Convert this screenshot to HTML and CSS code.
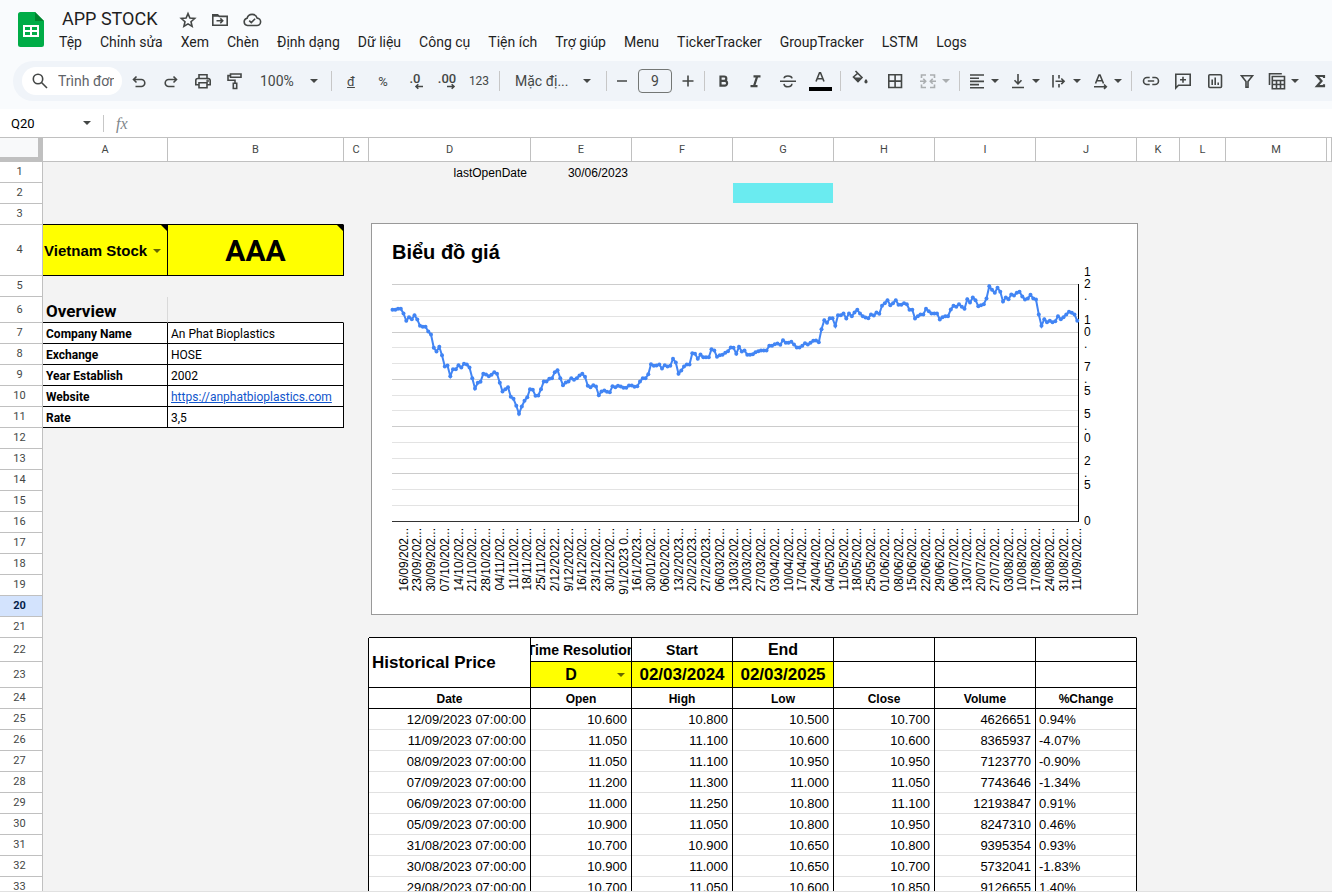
FILE: index.html
```html
<!DOCTYPE html>
<html lang="vi">
<head>
<meta charset="utf-8">
<title>APP STOCK</title>
<link rel="stylesheet" href="styles.css">
</head>
<body>
<header class="top">
  <div class="brand">
    <svg class="logo" viewBox="0 0 26 35" aria-hidden="true"><path fill="#00ac47" d="M2.500 0H17l9 9v23.500a2.500 2.500 0 0 1-2.500 2.500h-21A2.500 2.500 0 0 1 0 32.500v-30A2.500 2.500 0 0 1 2.500 0z"/><path fill="#00832d" d="M17 0l9 9h-9z"/><path fill="#fff" fill-rule="evenodd" d="M5 13h16v12H5zM7 15v3h5v-3zm7 0v3h5v-3zM7 20v3h5v-3zm7 0v3h5v-3z"/></svg>
    <div class="heading">
      <div class="title-row">
        <h1>APP STOCK</h1>
        <button class="tool" aria-label="Gắn dấu sao"><svg viewBox="0 0 20 20"><path d="M10 3.600l1.900 4.500 4.800.4-3.700 3.200 1.100 4.700L10 13.900l-4.100 2.500L7 11.700 3.300 8.500l4.800-.4z"/></svg></button>
        <button class="tool" aria-label="Di chuyển"><svg viewBox="0 0 20 20"><path d="M2.800 15.200V4.800h4.800l1.600 1.600h8v8.800zM2.800 6h5.500M6.500 10.800h6M10.300 8.400l2.400 2.400-2.400 2.400"/></svg></button>
        <button class="tool" aria-label="Trạng thái tài liệu"><svg viewBox="0 0 20 20"><path d="M5.500 15.500a3.700 3.700 0 0 1-.4-7.300 5.200 5.200 0 0 1 10-.1 3.700 3.700 0 0 1-.4 7.400zM7.200 10.600l2.100 2 3.800-3.800"/></svg></button>
      </div>
      <nav class="menu">
        <button>Tệp</button><button>Chỉnh sửa</button><button>Xem</button><button>Chèn</button><button>Định dạng</button><button>Dữ liệu</button><button>Công cụ</button><button>Tiện ích</button><button>Trợ giúp</button><button>Menu</button><button>TickerTracker</button><button>GroupTracker</button><button>LSTM</button><button>Logs</button>
      </nav>
    </div>
  </div>
  <div class="toolbar">
    <div class="search"><svg viewBox="0 0 20 20" aria-hidden="true"><circle cx="8" cy="8" r="4.700"/><path d="M11.500 11.500l5.500 5.500"/></svg><input type="text" placeholder="Trình đơn" aria-label="Trình đơn"></div>
    <button class="tool" aria-label="Hoàn tác"><svg viewBox="0 0 20 20"><path d="M7.500 5.500L4.500 8.500l3 3M4.500 8.500h7.800a3.500 3.500 0 0 1 0 7H6.500"/></svg></button>
    <button class="tool" aria-label="Làm lại"><svg viewBox="0 0 20 20"><path d="M12.500 5.500l3 3-3 3M15.500 8.500H7.700a3.500 3.500 0 0 0 0 7h5.800"/></svg></button>
    <button class="tool" aria-label="In"><svg viewBox="0 0 20 20"><path d="M6 7.500V3.800h8v3.700M5.500 13.800H2.800V9.500a2 2 0 0 1 2-2h10.400a2 2 0 0 1 2 2v4.300h-2.700M6 11.800h8v5H6z"/><circle cx="14.600" cy="9.900" r=".5"/></svg></button>
    <button class="tool" aria-label="Sơn định dạng"><svg viewBox="0 0 20 20"><path d="M5.500 3h10.500v3.300H5.500zM5.500 4.600H3v4.600h7v3M8.300 12.300h3.400v5.200H8.300z"/></svg></button>
    <label class="pick zoom"><select aria-label="Thu phóng"><option>100%</option></select></label>
    <span class="rule"></span>
    <button class="tool text"><u>đ</u></button>
    <button class="tool text">%</button>
    <button class="tool text dec" aria-label="Giảm số thập phân"><b>.0</b><svg viewBox="0 0 20 20"><path d="M18 15.500h-7M13.300 13.200L11 15.500l2.300 2.300"/></svg></button>
    <button class="tool text dec" aria-label="Tăng số thập phân"><b>.00</b><svg viewBox="0 0 20 20"><path d="M10 15.500h7M14.700 13.200l2.300 2.300-2.300 2.300"/></svg></button>
    <button class="tool text small">123</button>
    <span class="rule"></span>
    <label class="pick font"><select aria-label="Phông chữ"><option>Mặc đị...</option></select></label>
    <span class="rule"></span>
    <button class="tool step" aria-label="Giảm cỡ chữ"><svg viewBox="0 0 20 20"><path d="M5 10h10"/></svg></button>
    <input class="size" type="text" value="9" aria-label="Cỡ chữ">
    <button class="tool step" aria-label="Tăng cỡ chữ"><svg viewBox="0 0 20 20"><path d="M4.500 10h11M10 4.500v11"/></svg></button>
    <span class="rule"></span>
    <button class="tool" aria-label="Đậm"><svg viewBox="0 0 20 20"><path class="heavy" d="M6.500 5.500h3.600a2.200 2.200 0 0 1 0 4.400H6.500zM6.500 9.900h4.200a2.400 2.400 0 0 1 0 4.800H6.500z"/></svg></button>
    <button class="tool" aria-label="Nghiêng"><svg viewBox="0 0 20 20"><path class="heavy" d="M7.500 5.300h7M4.500 15.200h7M11.200 5.300L8 15.200"/></svg></button>
    <button class="tool" aria-label="Gạch ngang"><svg viewBox="0 0 20 20"><path d="M2 10.300h16M14 7.300c-.3-3-7.700-3.300-7.900 0M6 12.800c.4 4 7.800 3.700 7.900 0"/></svg></button>
    <button class="tool color" aria-label="Màu văn bản"><svg viewBox="0 0 20 20"><path d="M6 12.500L9.500 3.800h1L14 12.500M7.200 9.800h5.600"/></svg><i></i></button>
    <span class="rule"></span>
    <button class="tool raise" aria-label="Màu nền"><svg viewBox="0 0 20 20"><path d="M5.500 3l6.500 6.500-4 4-4.500-4.500L8 5"/><path class="solid" d="M3.500 9.500h8.700L8 14zM16 11c1 1.300 1.600 2 1.600 2.800a1.600 1.600 0 0 1-3.200 0c0-.8.600-1.500 1.600-2.800z"/></svg></button>
    <button class="tool gap" aria-label="Đường viền"><svg viewBox="0 0 20 20"><path d="M3.800 3.800h12.700v12.700H3.800zM10.100 3.800v12.700M3.800 10.100h12.700"/></svg></button>
    <button class="split off gap" aria-label="Hợp nhất ô" disabled><svg viewBox="0 0 20 20"><path d="M8 4H3.500v3M8 16.500H3.500v-3M12 4h4.500v3M12 16.500h4.500v-3M2 10.300h5.500M5.300 7.800l2.400 2.500-2.400 2.500M18 10.300h-5.500M14.700 7.800l-2.400 2.500 2.400 2.500"/></svg></button>
    <span class="rule"></span>
    <button class="split" aria-label="Căn ngang"><svg viewBox="0 0 20 20"><path d="M3 4h14M3 7.200h9M3 10.400h14M3 13.600h9M3 16.800h14"/></svg></button>
    <button class="split" aria-label="Căn dọc"><svg viewBox="0 0 20 20"><path d="M4 16.500h12M10 3v9.500M6.500 9.300l3.500 3.500 3.500-3.500"/></svg></button>
    <button class="split" aria-label="Xuống dòng"><svg viewBox="0 0 20 20"><path d="M4 4v12.500M10 4v3.500M10 13v3.500M6.500 10.300h8M12.300 7.500l2.800 2.800-2.800 2.800"/></svg></button>
    <button class="split" aria-label="Xoay văn bản"><svg viewBox="0 0 20 20"><path d="M5.500 12.500L9 4h1l3.500 8.500M6.800 9.700h5.400M4 15.700h12M14 13.500l2.300 2.200-2.300 2.200"/></svg></button>
    <span class="rule"></span>
    <button class="tool" aria-label="Chèn đường liên kết"><svg viewBox="0 0 20 20"><path d="M8.700 6.500H6a3.500 3.500 0 0 0 0 7h2.700M11.300 6.500H14a3.500 3.500 0 0 1 0 7h-2.700M6.800 10h6.400"/></svg></button>
    <button class="tool" aria-label="Chèn nhận xét"><svg viewBox="0 0 20 20"><path d="M2.800 17V3.300h14.400v11H5.500zM10 5.700v6M7 8.700h6"/></svg></button>
    <button class="tool" aria-label="Chèn biểu đồ"><svg viewBox="0 0 20 20"><rect x="3.800" y="3.800" width="12.700" height="12.700" rx="1"/><path d="M7.200 8.500v5.500M10.200 6.500V14M13.200 11.500V14"/></svg></button>
    <button class="tool" aria-label="Tạo bộ lọc"><svg viewBox="0 0 20 20"><path d="M4.500 4.800h11L11 10.500v5.700H9v-5.700z"/></svg></button>
    <button class="split" aria-label="Chế độ xem bộ lọc"><svg viewBox="0 0 20 20"><path d="M2.500 14V2.800h12.300M5.300 5.500h12.200v12.200H5.300zM5.300 9.500h12.200M5.300 13.500h12.200M9.500 9.500v8.200M13.500 9.500v8.200"/></svg></button>
    <button class="tool" aria-label="Hàm"><svg viewBox="0 0 20 20"><path class="heavy" d="M14 7V5H7l4.500 5.100L7 15.200h7v-2"/></svg></button>
  </div>
</header>

<div class="formula">
  <label class="pick name"><input type="text" value="Q20" aria-label="Hộp tên"></label>
  <span class="rule"></span>
  <i class="fx">fx</i>
  <input class="entry" type="text" aria-label="Thanh công thức">
</div>

<main class="sheet">
<table>
  <colgroup><col class="c-num"><col class="c-a"><col class="c-b"><col class="c-c"><col class="c-d"><col class="c-std"><col class="c-std"><col class="c-std"><col class="c-std"><col class="c-std"><col class="c-std"><col class="c-k"><col class="c-l"><col class="c-std"><col></colgroup>
  <thead>
    <tr><td class="corner"></td><th>A</th><th>B</th><th>C</th><th>D</th><th>E</th><th>F</th><th>G</th><th>H</th><th>I</th><th>J</th><th>K</th><th>L</th><th>M</th><th></th></tr>
  </thead>
  <tbody>
    <tr><th>1</th><td colspan="3"></td><td class="right">lastOpenDate</td><td class="right">30/06/2023</td><td colspan="9"></td></tr>
    <tr><th>2</th><td colspan="6"></td><td class="cyan"></td><td colspan="7"></td></tr>
    <tr><th>3</th><td class="edge" colspan="2"></td><td colspan="12"></td></tr>
    <tr class="r4"><th>4</th><td class="box yellow note"><label class="cell-pick market"><select aria-label="Thị trường"><option>Vietnam Stock</option></select></label></td><td class="box yellow note ticker">AAA</td><td colspan="12"></td></tr>
    <tr><th>5</th><td colspan="14"></td></tr>
    <tr class="r6"><th>6</th><td class="overview">Overview</td><td class="edge"></td><td colspan="12"></td></tr>
    <tr class="info"><th>7</th><td class="box bold">Company Name</td><td class="box">An Phat Bioplastics</td><td colspan="12"></td></tr>
    <tr class="info"><th>8</th><td class="box bold">Exchange</td><td class="box">HOSE</td><td colspan="12"></td></tr>
    <tr class="info"><th>9</th><td class="box bold">Year Establish</td><td class="box">2002</td><td colspan="12"></td></tr>
    <tr class="info"><th>10</th><td class="box bold">Website</td><td class="box"><a href="https://anphatbioplastics.com">https://anphatbioplastics.com</a></td><td colspan="12"></td></tr>
    <tr class="info"><th>11</th><td class="box bold">Rate</td><td class="box">3,5</td><td colspan="12"></td></tr>
    <tr><th>12</th><td colspan="14"></td></tr>
    <tr><th>13</th><td colspan="14"></td></tr>
    <tr><th>14</th><td colspan="14"></td></tr>
    <tr><th>15</th><td colspan="14"></td></tr>
    <tr><th>16</th><td colspan="14"></td></tr>
    <tr><th>17</th><td colspan="14"></td></tr>
    <tr><th>18</th><td colspan="14"></td></tr>
    <tr><th>19</th><td colspan="14"></td></tr>
    <tr><th class="current">20</th><td colspan="14"></td></tr>
    <tr><th>21</th><td colspan="3"></td><td class="edge" colspan="7"></td><td colspan="4"></td></tr>
    <tr class="r22"><th>22</th><td class="side" colspan="3"></td><td class="box history" rowspan="2">Historical Price</td><td class="box head"><div class="mid">Time Resolution</div></td><td class="box head center">Start</td><td class="box head end center">End</td><td class="box"></td><td class="box"></td><td class="box"></td><td colspan="4"></td></tr>
    <tr class="r23"><th>23</th><td class="side" colspan="3"></td><td class="box yellow"><label class="cell-pick res"><select aria-label="Time Resolution"><option>D</option></select></label></td><td class="box yellow date center">02/03/2024</td><td class="box yellow date center">02/03/2025</td><td class="box"></td><td class="box"></td><td class="box"></td><td colspan="4"></td></tr>
    <tr class="names"><th>24</th><td class="side" colspan="3"></td><td class="box">Date</td><td class="box">Open</td><td class="box">High</td><td class="box">Low</td><td class="box">Close</td><td class="box">Volume</td><td class="box">%Change</td><td colspan="4"></td></tr>
    <tr class="data"><th>25</th><td class="side" colspan="3"></td><td>12/09/2023 07:00:00</td><td>10.600</td><td>10.800</td><td>10.500</td><td>10.700</td><td>4626651</td><td>0.94%</td><td colspan="4"></td></tr>
    <tr class="data"><th>26</th><td class="side" colspan="3"></td><td>11/09/2023 07:00:00</td><td>11.050</td><td>11.100</td><td>10.600</td><td>10.600</td><td>8365937</td><td>-4.07%</td><td colspan="4"></td></tr>
    <tr class="data"><th>27</th><td class="side" colspan="3"></td><td>08/09/2023 07:00:00</td><td>11.050</td><td>11.100</td><td>10.950</td><td>10.950</td><td>7123770</td><td>-0.90%</td><td colspan="4"></td></tr>
    <tr class="data"><th>28</th><td class="side" colspan="3"></td><td>07/09/2023 07:00:00</td><td>11.200</td><td>11.300</td><td>11.000</td><td>11.050</td><td>7743646</td><td>-1.34%</td><td colspan="4"></td></tr>
    <tr class="data"><th>29</th><td class="side" colspan="3"></td><td>06/09/2023 07:00:00</td><td>11.000</td><td>11.250</td><td>10.800</td><td>11.100</td><td>12193847</td><td>0.91%</td><td colspan="4"></td></tr>
    <tr class="data"><th>30</th><td class="side" colspan="3"></td><td>05/09/2023 07:00:00</td><td>10.900</td><td>11.050</td><td>10.800</td><td>10.950</td><td>8247310</td><td>0.46%</td><td colspan="4"></td></tr>
    <tr class="data"><th>31</th><td class="side" colspan="3"></td><td>31/08/2023 07:00:00</td><td>10.700</td><td>10.900</td><td>10.650</td><td>10.800</td><td>9395354</td><td>0.93%</td><td colspan="4"></td></tr>
    <tr class="data"><th>32</th><td class="side" colspan="3"></td><td>30/08/2023 07:00:00</td><td>10.900</td><td>11.000</td><td>10.650</td><td>10.700</td><td>5732041</td><td>-1.83%</td><td colspan="4"></td></tr>
    <tr class="data"><th>33</th><td class="side" colspan="3"></td><td>29/08/2023 07:00:00</td><td>10.700</td><td>11.050</td><td>10.600</td><td>10.850</td><td>9126655</td><td>1.40%</td><td colspan="4"></td></tr>
  </tbody>
</table>
<figure class="chart"><svg id="price" viewBox="0 0 765 390" role="img" aria-label="Biểu đồ giá"></svg></figure>
</main>
<script src="chart.js"></script>
</body>
</html>
```
FILE: styles.css
```css
* { box-sizing: border-box; }
body {
  margin: 0;
  height: 100vh;
  overflow: hidden;
  display: flex;
  flex-direction: column;
  background: #fff;
  color: #000;
  font: 12px "Liberation Sans", Arial, sans-serif;
}
button, input, select {
  font: inherit;
  color: inherit;
  background: none;
  border: 0;
  padding: 0;
  margin: 0;
  min-width: 0;
  border-radius: 0;
}
select { appearance: none; }

/* title and menus */
.top { background: #f9fbfd; padding: 8px 0; font-family: Roboto, sans-serif; color: #444746; flex: none; }
.brand { display: flex; padding-left: 18px; gap: 15px; }
.logo { width: 26px; height: 35px; margin-top: 4px; }
.title-row { display: flex; align-items: center; height: 24px; padding-left: 3px; }
h1 { margin: 0 14px 2px 0; font-weight: 400; font-size: 18px; line-height: 22px; color: #1f1f1f; }
.menu { display: flex; align-items: flex-start; gap: 18px; height: 22px; }
.menu button { font-size: 14px; line-height: 20px; color: #1f1f1f; white-space: nowrap; }

/* toolbar */
.toolbar {
  display: flex;
  align-items: center;
  height: 40px;
  margin: 7px 0 0 13px;
  padding-left: 9px;
  border-radius: 20px 0 0 20px;
  background: #f0f4f9;
  overflow: hidden;
}
.toolbar > * { flex: none; }
svg { display: block; }
.tool svg, .split svg, .search svg { width: 20px; height: 20px; fill: none; stroke: #444746; stroke-width: 1.6; }
.tool svg .heavy { stroke-width: 2.2; }
.tool svg .solid { fill: #444746; stroke: none; }
.tool { width: 32px; height: 28px; display: flex; align-items: center; justify-content: center; position: relative; }
.text { font-size: 13px; }
.small { font-size: 12px; }
.dec b { font-weight: 500; padding-bottom: 6px; }
.dec svg { position: absolute; left: 6px; top: 4px; }
.step { width: 24px; }
.gap { margin-left: 3px; }
.raise { padding-bottom: 6px; }
.color { padding-bottom: 4px; }
.color i { position: absolute; left: 5px; bottom: 4px; width: 23px; height: 4px; background: #000; }
.search {
  display: flex;
  align-items: center;
  width: 100px;
  height: 28px;
  margin-right: 1px;
  padding: 0 8px;
  border-radius: 14px;
  background: #fff;
  gap: 8px;
}
.search svg { flex: none; }
.search input { width: 56px; font-size: 14px; }
.search input::placeholder { color: #5f6368; opacity: 1; }
.rule { width: 1px; height: 20px; margin: 0 3px 0 4px; background: #c7c7c7; }
.split { position: relative; width: 41px; height: 28px; padding-left: 4px; }
.pick { position: relative; display: block; }
.pick select, .pick input { width: 100%; height: 28px; font-size: 14px; }
.pick::after, .split::after, .cell-pick::after {
  content: "";
  position: absolute;
  right: 9px;
  top: 50%;
  margin-top: -2px;
  border: 4px solid transparent;
  border-top-color: #444746;
  border-bottom: 0;
}
.split::after { right: 5px; }
.off { opacity: .4; }
.zoom { width: 76px; padding-left: 9px; }
.font { width: 99px; padding-left: 12px; }
.font::after { right: 11px; }
.size { width: 34px; height: 24px; margin: 0 4px; border: 1px solid #747775; border-radius: 4px; text-align: center; font-size: 14px; }

/* formula bar */
.formula { display: flex; align-items: center; height: 28px; flex: none; font-family: Roboto, sans-serif; }
.name { width: 99px; padding-left: 11px; }
.name::after { right: 8px; }
.name input { font-size: 13px; }
.formula .rule { height: 17px; }
.fx { padding: 2px 9px 0; font: italic 16px/20px "Liberation Serif", serif; color: #80868b; }
.entry { flex: 1; height: 28px; }

/* grid */
.sheet { position: relative; flex: 1; min-height: 0; overflow: hidden; margin-bottom: 3px; background: #f3f3f3; box-shadow: 0 1px #e1e1e1; }
table { width: 100%; table-layout: fixed; border-collapse: separate; border-spacing: 0; }
.c-num { width: 43px; }
.c-a { width: 125px; }
.c-b { width: 176px; }
.c-c { width: 25px; }
.c-d { width: 162px; }
.c-std { width: 101px; }
.c-k { width: 43px; }
.c-l { width: 46px; }
th, td { padding: 0 3px; border: 0 solid transparent; border-width: 0 1px 1px 0; overflow: hidden; white-space: nowrap; text-align: left; }
td { line-height: 18px; padding-top: 1px; }
th { font: 11px/16px Roboto, sans-serif; color: #444746; background: #fff; border-color: #c0c0c0; text-align: center; }
tbody tr { height: 21px; }
tbody th { padding: 0 3px 0 0; }
thead tr { height: 25px; }
thead th, .corner { border-top: 1px solid #c0c0c0; }
.corner { background: #f8f9fa; border-right: 5px solid #c0c0c0; border-bottom: 5px solid #c0c0c0; }
th.current { background: #d3e3fd; color: #041e49; font-weight: 700; }
.r4 { height: 51px; }
.r6 { height: 26px; }
.r22 { height: 24px; }
.r23 { height: 26px; }
.right { text-align: right; }
.center { text-align: center; }
.cyan { background: #6aebf0; background-clip: padding-box; }
.edge { border-bottom-color: #000; }
.side { border-right-color: #000; border-bottom-width: 0; }
.box { background: #fff; border-color: #000; }
.yellow { background: #ff0; }
.bold { font-weight: 700; }
.info .box { font-family: Roboto, sans-serif; padding-top: 2px; }
.info a { color: #1155cc; }
.note { position: relative; }
.note::after { content: ""; position: absolute; right: 0; top: 0; border: solid transparent; border-width: 0 0 6px 6px; border-right: 0; border-top: 6px solid #000; border-bottom: 0; }
.ticker { font: 700 30px Roboto, sans-serif; text-align: center; }
.overview { font: 700 17px/20px Roboto, sans-serif; border-right-color: #d9d9d9; border-bottom-color: #000; padding-top: 2px; }
.cell-pick { position: relative; display: block; font-weight: 700; }
.cell-pick select { width: 100%; }
.cell-pick::after { border-top-color: #666600; }
.market { font-size: 15px; margin: 0 -2px; }
.market::after { right: 5px; }
.res { font-size: 16px; padding-right: 20px; }
.res select { text-align: center; text-align-last: center; }
.res::after { right: 3px; }
.history { font-size: 17px; font-weight: 700; }
.head { font-size: 14px; font-weight: 700; }
.end { font-size: 16px; }
.mid { display: flex; justify-content: center; margin: 0 -3px; overflow: hidden; }
.date { font-size: 17px; font-weight: 700; padding-left: 0; padding-right: 0; }
.names .box { font-weight: 700; text-align: center; }
.data td { font-size: 13px; }
.data td:nth-child(n+3):nth-child(-n+9) {
  background: #fff;
  border-right-color: #000;
  border-bottom-width: 0;
  box-shadow: inset 0 -1px #e1e1e1;
  padding-right: 4px;
  text-align: right;
}
.data td:nth-child(9):nth-child(9) { text-align: left; }

/* floating price chart */
.chart { position: absolute; left: 371px; top: 86px; width: 767px; margin: 0; border: 1px solid #999; background: #fff; }
.chart text { font: 12px "Liberation Sans", Arial, sans-serif; fill: #000; }
.chart .title { font-size: 20px; font-weight: 700; }
.chart line { stroke: #e3e3e3; }
.chart .major { stroke: #ccc; }
.chart .axis { stroke: #333; }
.chart .value { stroke: #000; }
.chart polyline { fill: none; stroke: #4285f4; stroke-width: 2; }
.chart circle { fill: #4285f4; }
```
FILE: chart.js
```js
// Closing price for each session, in thirds of a pixel above the zero line.
const closes = [283,283,280,280,294,316,305,311,299,312,331,334,334,348,357,397,408,394,419,453,450,482,461,461,449,456,445,447,456,488,519,502,499,475,477,482,478,470,475,502,528,521,515,544,550,571,595,573,556,545,521,523,541,540,521,498,498,490,488,470,464,488,509,501,498,488,493,488,480,475,484,511,515,509,513,539,528,525,529,530,512,515,511,513,517,517,510,510,514,512,498,488,488,476,446,451,450,447,459,449,453,451,430,441,475,465,453,447,447,413,415,430,417,425,425,425,401,405,424,419,418,412,407,396,397,415,394,408,405,418,418,416,410,407,405,405,405,391,391,386,384,388,374,382,382,379,387,396,396,391,383,387,382,376,375,380,341,314,322,308,308,331,299,299,294,309,294,302,291,283,294,302,306,308,297,300,291,295,271,263,254,269,263,254,268,268,263,266,283,283,309,302,297,297,280,287,294,294,294,312,305,302,302,282,271,274,266,274,280,251,261,246,254,272,269,266,249,212,223,232,217,229,258,246,251,237,240,232,229,243,252,249,238,249,252,297,331,311,320,316,320,317,302,311,305,297,289,292,297,316].map(y => 918 - y);

const dates = ("16/09/202 23/09/202 30/09/202 07/10/202 14/10/202 21/10/202 28/10/202 04/11/202 11/11/202 18/11/202 25/11/202 2/12/2022 9/12/2022 16/12/202 23/12/202 30/12/202 9/1/2023_0 16/1/2023 30/01/202 06/02/202 13/2/2023 20/2/2023 27/2/2023 06/03/202 13/03/202 20/03/202 27/03/202 03/04/202 10/04/202 17/04/202 24/04/202 04/05/202 11/05/202 18/05/202 25/05/202 01/06/202 08/06/202 15/06/202 22/06/202 29/06/202 06/07/202 13/07/202 20/07/202 27/07/202 03/08/202 10/08/202 17/08/202 24/08/202 31/08/202 11/09/202").split(" ");

const svg = document.getElementById("price");
const left = 20, right = 706, zero = 297.5, step = 2.75;

function add(name, attrs, text) {
  const el = document.createElementNS("http://www.w3.org/2000/svg", name);
  for (const key in attrs) el.setAttribute(key, attrs[key]);
  if (text) el.textContent = text;
  svg.append(el);
}

add("text", { class: "title", x: 20, y: 35 }, "Biểu đồ giá");

// Every third line is a labelled one; the last is the zero line.
const lines = [60, 76, 92, 108, 123, 139, 155, 171, 186, 202, 218, 234, 249, 265, 281, 297];
lines.forEach((top, i) => {
  const y = top + .5;
  add("line", { x1: left, x2: right, y1: y, y2: y, class: top === 297 ? "axis" : i % 3 ? "minor" : "major" });
});
add("line", { class: "value", x1: right + .5, x2: right + .5, y1: 60, y2: 298 });

const points = closes.map((c, i) => [20.5 + i * step, zero - c / 3]);
add("polyline", { points: points.map(p => p.map(n => n.toFixed(1)).join()).join(" ") });
for (const [x, y] of points) add("circle", { cx: x.toFixed(1), cy: y.toFixed(1), r: 2 });

// Value labels are stacked one character per line.
[["12.", 52], ["10.", 100], ["7.5", 147], ["5.0", 194], ["2.5", 241], ["0", 301]].forEach(([label, y]) => {
  [...label].forEach((ch, i) => add("text", { x: 712, y: y + i * 12 }, ch));
});

dates.forEach((d, i) => {
  const x = Math.round(20.5 + (4 + i * 5) * step) + 4;
  add("text", { x, y: 304, "text-anchor": "end", transform: `rotate(-90 ${x} 304)` }, d.replace("_", " ") + "...");
});
```
